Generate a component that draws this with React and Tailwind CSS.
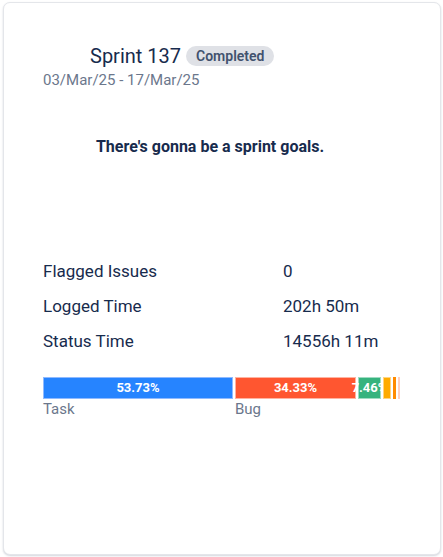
const stats = [
  { label: "Flagged Issues", value: "0" },
  { label: "Logged Time", value: "202h 50m" },
  { label: "Status Time", value: "14556h 11m" },
];

// widths in px, taken from the chart at this card size
const segments = [
  { name: "Task", pct: 53.73, w: 190, bg: "#2684ff", border: "#8fbaff", showLabel: true },
  { name: "Bug", pct: 34.33, w: 121, bg: "#ff5630", border: "#ffb3a1", showLabel: true },
  { name: "Story", pct: 7.46, w: 23, bg: "#36b37e", border: "#9fdcc2", showLabel: false },
  { name: "Improvement", pct: 2.6, w: 8, bg: "#ffab00", border: "#ffd580", showLabel: false },
  { name: "Epic", pct: 0.9, w: 3, bg: "#ff8b00", border: "#ff8b00", showLabel: false },
  { name: "Other", pct: 0.6, w: 2, bg: "#ffffff", border: "#ffd0c0", showLabel: false },
];

function DistributionBar() {
  return (
    <div className="mt-[24px] flex gap-[2px]">
      {segments.map((s) => (
        <div key={s.name} className="shrink-0" style={{ width: s.w }}>
          <div
            className="flex h-[22px] items-center justify-center overflow-visible whitespace-nowrap border text-[13px] font-bold text-white"
            style={{ backgroundColor: s.bg, borderColor: s.border }}
          >
            {s.pct > 5 ? `${s.pct.toFixed(2)}%` : ""}
          </div>
          {s.showLabel && (
            <p className="text-[15px] leading-[20px] text-[#6b778c]">{s.name}</p>
          )}
        </div>
      ))}
    </div>
  );
}

export default function App() {
  return (
    <main className="min-h-screen bg-white pt-[2px] pl-[3px] font-['Roboto','Liberation_Sans',sans-serif]">
      <section className="h-[553px] w-[438px] rounded-[7px] border border-[#e4e6ea] bg-white px-[39px] pt-[39px] shadow-[0_1px_2px_rgba(9,30,66,0.18)]">
        <div className="flex items-center gap-[5px] pl-[47px]">
          <h1 className="text-[20px] leading-[28px] text-[#172b4d]">Sprint 137</h1>
          <span className="rounded-full bg-[#dfe1e6] px-[10px] text-[14px] font-semibold leading-[20px] text-[#42526e]">
            Completed
          </span>
        </div>
        <p className="text-[15px] leading-[20px] text-[#6b778c]">03/Mar/25 - 17/Mar/25</p>

        <p className="mt-[45px] pr-[24px] text-center text-[16px] font-bold leading-[24px] text-[#172b4d]">
          There's gonna be a sprint goals.
        </p>

        <div className="mt-[100px] space-y-[11px]">
          {stats.map((row) => (
            <div key={row.label} className="flex text-[17px] leading-[24px] text-[#172b4d]">
              <span className="w-[240px]">{row.label}</span>
              <span>{row.value}</span>
            </div>
          ))}
        </div>

        <DistributionBar />
      </section>
    </main>
  );
}
